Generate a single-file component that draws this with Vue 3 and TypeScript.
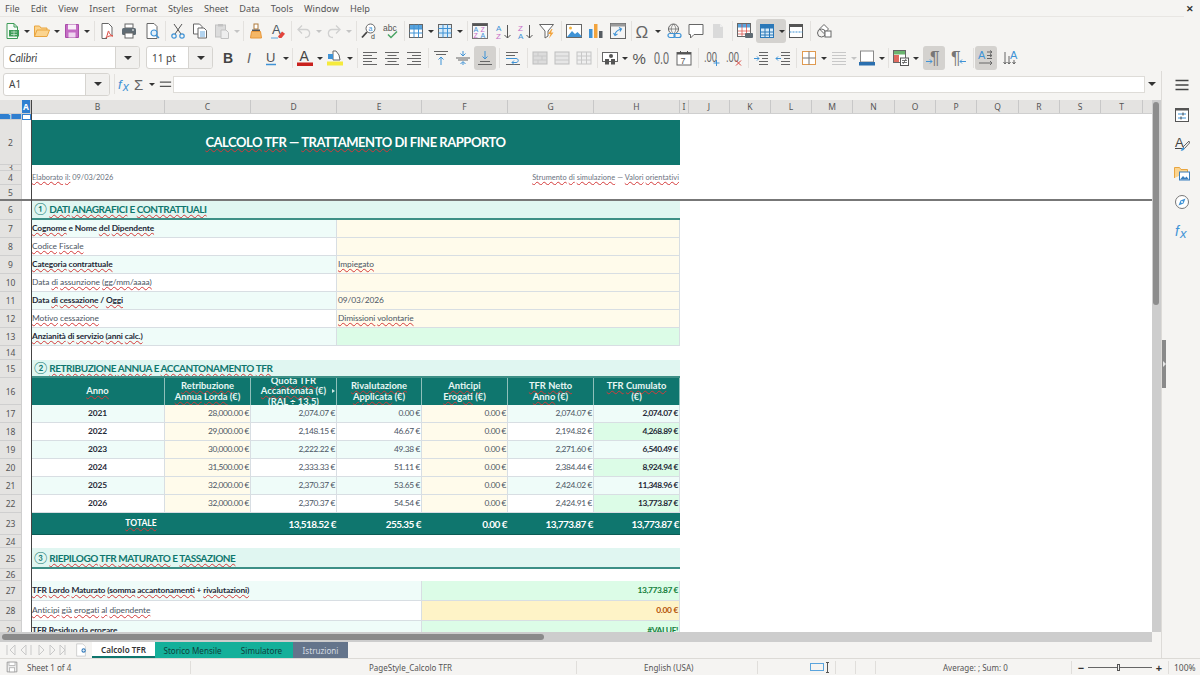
<script setup lang="ts">
type Cell = { s: number; t?: string; c?: string }
type Row = { n: number; h: number; cells: Cell[]; hc?: string }
type Tool = { k: 'btn'; i: string; dd: boolean; on: boolean } | { k: 'sep'; w: number } | { k: 'gap'; w: number }

const T = (x: number, y: number, size: number, fill: string, s: string, extra = '') =>
  `<text x="${x}" y="${y}" font-size="${size}" fill="${fill}" font-family="Liberation Sans" ${extra}>${s}</text>`
const GREY = '#666'
const BLUE = '#3f93d6'
const lines = (d: string, col = GREY) => `<path d="${d}" fill="none" stroke="${col}"/>`

// toolbar glyphs, all drawn on a 16 grid
const icons: Record<string, string> = {
  new: `<path d="M3 .5h7l3.5 3.5v11.5H3z" fill="#f6fbf7" stroke="#3d9b57"/><path d="M10 .5V4h3.5" fill="none" stroke="#3d9b57"/><rect x="5" y="7" width="10" height="6.5" fill="#3d9b57"/><path d="M7 9h6M7 11.5h6M10 7.5v5.5" stroke="#d6f0dc" stroke-width=".7"/>`,
  open: `<path d="M.5 13.5V3h5l1.5 2h6v2" fill="#fbd48f" stroke="#e9a53f"/><path d="M.5 13.5 3 7h12.5l-2.5 6.5z" fill="#fbd48f" stroke="#e9a53f"/>`,
  save: `<path d="M1.5 1.5h13v13h-13z" fill="#c46cc4" stroke="#a94ca9"/><rect x="4" y="1.5" width="8" height="5" fill="#f8eef8"/><rect x="4.5" y="9.5" width="7" height="5" fill="#efd6ef"/>`,
  pdf: `<path d="M3 15.500V.5h6.500L13 4v8" fill="#fff" stroke="${GREY}"/><path d="M3 15.500h5" stroke="${GREY}"/><path d="M7 15c2-4 2-7 2.500-7s.5 4 4.500 5c-3-.5-5 0-7 2z" fill="none" stroke="#d9453c"/>`,
  print: `<rect x="4" y="1" width="8" height="4" fill="#fff" stroke="${GREY}"/><rect x="1" y="5" width="14" height="7" rx="1.500" fill="#5f6b73"/><rect x="4" y="10" width="8" height="5" fill="#fff" stroke="${GREY}"/><path d="M11 7h2" stroke="#fff"/>`,
  preview: `<path d="M3 .5h7L13 3.500V15.500H3z" fill="#fff" stroke="${GREY}"/><circle cx="10" cy="10" r="3" fill="#e4f1fb" stroke="${BLUE}" stroke-width="1.200"/><path d="m12 12 3 3" stroke="${BLUE}" stroke-width="1.500"/>`,
  cut: `<path d="M4 1 11 11M12 1 5 11" stroke="#555" fill="none"/><circle cx="4" cy="13" r="2.200" fill="none" stroke="${BLUE}" stroke-width="1.200"/><circle cx="12" cy="13" r="2.200" fill="none" stroke="${BLUE}" stroke-width="1.200"/>`,
  copy: `<path d="M1.500 1h6L10 3.500V11H1.500z" fill="#fff" stroke="${GREY}"/><path d="M6 5h6l2.500 2.500V15H6z" fill="#fff" stroke="${GREY}"/><path d="M8 9h5M8 11h5M8 13h5" stroke="${BLUE}" stroke-width=".8"/>`,
  paste: `<rect x="1.500" y="2" width="10" height="12" fill="#dcdcdc" stroke="#c2c2c2"/><rect x="4" y="1" width="5" height="2.500" fill="#c2c2c2"/><path d="M7 7h5l2.500 2.500v6H7z" fill="#eee" stroke="#c2c2c2"/>`,
  clone: `<rect x="6" y="1" width="4" height="5" fill="#fff" stroke="#b07a3a"/><path d="M4 6.500h8v2H4z" fill="#555"/><path d="M3.500 8.500h9l1 6.500h-11z" fill="#f6b765" stroke="#e8973a"/>`,
  clear: T(2, 11, 13, '#4a5560', 'A') + `<path d="M8 13.500 12 8.500l3 2.300-3.500 4.200H9z" fill="#e2443c"/><path d="M1 15h7" stroke="#5aa4dd"/>`,
  undo: `<path d="M3 6.500h7c5 0 5 8-1 8" fill="none" stroke="#d0d0d0" stroke-width="1.300"/><path d="M6 2.500 2 6.500l4 4" fill="none" stroke="#d0d0d0" stroke-width="1.300"/>`,
  redo: `<path d="M13 6.500H6c-5 0-5 8 1 8" fill="none" stroke="#d0d0d0" stroke-width="1.300"/><path d="m10 2.500 4 4-4 4" fill="none" stroke="#d0d0d0" stroke-width="1.300"/>`,
  find: `<circle cx="9.500" cy="5.500" r="4.500" fill="#fff" stroke="${GREY}"/><path d="M6 9 1 14.500" stroke="#444" stroke-width="1.800"/>` + T(7.500, 8, 7, BLUE, 'a') + T(10, 15.500, 7, '#444', 'd'),
  spell: T(0, 8, 8.500, '#555', 'abc') + `<path d="m5 11.500 3 3 6-6" fill="none" stroke="#4aa564" stroke-width="1.500"/>`,
  rows: `<rect x="1.500" y="1.500" width="13" height="13" fill="#fff" stroke="${GREY}"/><rect x="2" y="2" width="12" height="4" fill="#5aa4dd"/><path d="M1.500 6h13M1.500 10h13M6 1.500v13M10.500 1.500v13" stroke="${BLUE}"/>`,
  cols: `<rect x="1.500" y="1.500" width="13" height="13" fill="#d9ebf8" stroke="${GREY}"/><path d="M1.500 5.500h13M1.500 10h13M6 1.500v13M10.500 1.500v13" stroke="${BLUE}"/>`,
  sort: `<rect x=".5" y=".5" width="15" height="15" fill="#f7f7f7" stroke="#777"/><rect x=".5" y=".5" width="15" height="2.500" fill="#555"/>` + T(1.500, 9, 7, BLUE, 'A') + T(8.500, 9, 7, '#c66cc6', 'Z') + T(1.500, 15, 7, '#c66cc6', 'Z') + T(8.500, 15, 7, BLUE, 'A'),
  asc: T(1, 7.500, 8, BLUE, 'A') + T(1, 15.500, 8, '#c66cc6', 'Z') + lines('M12.500 2v13M9.500 12l3 3 3-3', '#555'),
  desc: T(1, 7.500, 8, '#c66cc6', 'Z') + T(1, 15.500, 8, BLUE, 'A') + lines('M12.500 2v13M9.500 12l3 3 3-3', '#555'),
  filter: `<path d="M.5 1.500h14L9 8v5L6 15V8z" fill="#fff" stroke="${GREY}"/><path d="M12.500 6 9 11h2.500L10 15.500l4.500-6H12l1.500-3.500z" fill="#f2a33c"/>`,
  image: `<rect x=".5" y="1.500" width="15" height="13" fill="#fff" stroke="${GREY}"/><circle cx="4.500" cy="5" r="1.500" fill="#f2b441"/><path d="m1 14 5-6 3 3 2.500-2 4 4v1z" fill="${BLUE}"/>`,
  chart: `<rect x="1" y="6" width="3.500" height="9" fill="${BLUE}"/><rect x="6" y="1" width="3.500" height="14" fill="#f2a33c"/><rect x="11" y="8" width="3.500" height="7" fill="#565c62"/>`,
  pivot: `<rect x=".5" y=".5" width="15" height="15" fill="#f4f4f4" stroke="${GREY}"/><rect x=".5" y=".5" width="15" height="3" fill="#9a9a9a"/><path d="M5 12c0-3 3-5 6-6M9 4.500 11.500 6 10 8.500M3.500 10 5 12.500 7.500 11" fill="none" stroke="${BLUE}" stroke-width="1.100"/>`,
  omega: T(0.500, 14.500, 17, '#666', 'Ω'),
  link: `<circle cx="7.500" cy="6" r="5" fill="none" stroke="${GREY}"/><path d="M2.500 6h10M7.500 1c-3 3-3 7 0 10M7.500 1c3 3 3 7 0 10" fill="none" stroke="${GREY}" stroke-width=".7"/><rect x="2" y="10.500" width="7" height="4" rx="2" fill="#f5f4f2" stroke="${BLUE}" stroke-width="1.200"/><rect x="8" y="10.500" width="7" height="4" rx="2" fill="none" stroke="${BLUE}" stroke-width="1.200"/>`,
  comment: `<path d="M1 1.500h14v10H6L2.500 15v-3.500H1z" fill="#fff" stroke="${GREY}"/>`,
  note: `<path d="M3 1h7l3 3v11H3z" fill="#dadada"/><path d="M10 1v3h3" fill="#eee"/>`,
  hdrprint: `<rect x=".5" y=".5" width="13" height="13" fill="#fff" stroke="${GREY}"/><rect x="1" y="1" width="12" height="3.500" fill="#5aa4dd"/><path d="M1 8h12M1 11h12M5 1v12M9.500 1v12" stroke="#d9453c" stroke-width=".7"/><rect x="8" y="10" width="8" height="5" rx="1" fill="#5f6b73"/>`,
  freeze: `<rect x="1.500" y="1.500" width="13" height="13" fill="#d9ebf8" stroke="#2b78b8"/><rect x="2" y="2" width="12" height="3.500" fill="#2b78b8"/><path d="M1.500 9h13M1.500 12h13M6 1.500v13M10.500 1.500v13" stroke="#2b78b8"/>`,
  split: `<rect x="1.500" y="1.500" width="13" height="13" fill="#fff" stroke="#555"/><rect x="1.500" y="1.500" width="13" height="2.500" fill="#555"/><path d="M1.500 9h13" stroke="${BLUE}" stroke-dasharray="2 1"/>`,
  shapes: `<path d="M8 1.500 12.500 6 8 10.500 3.500 6z" fill="#fff" stroke="${GREY}"/><circle cx="5.500" cy="10" r="4" fill="none" stroke="${GREY}"/><rect x="9" y="8" width="6" height="6" fill="#fff" stroke="${GREY}"/>`,
  bold: T(3, 13, 14, '#444', 'B', 'font-weight="bold"'),
  italic: T(5, 13, 14, '#666', 'I', 'font-style="italic" font-family="Liberation Serif"'),
  under: T(3, 11.500, 13, '#555', 'U') + `<path d="M3 14.500h10" stroke="${BLUE}" stroke-width="1.500"/>`,
  fcolor: T(2.500, 11, 14, '#444', 'A') + `<rect x="0" y="12.500" width="16" height="3.500" fill="#c9211e"/>`,
  bcolor: `<path d="M6 1h3l3 4 1 5H6z" fill="#fff" stroke="${GREY}"/><rect x="1" y="4" width="5" height="5" fill="${BLUE}"/><rect x="0" y="11.500" width="16" height="4" fill="#f5ea3c"/>`,
  left: lines('M1 2.500h14M1 5.500h9M1 8.500h14M1 11.500h9M1 14.500h14'),
  center: lines('M1 2.500h14M3.500 5.500h9M1 8.500h14M3.500 11.500h9M1 14.500h14'),
  right: lines('M1 2.500h14M6 5.500h9M1 8.500h14M6 11.500h9M1 14.500h14'),
  top: lines('M1 1.500h14M3 4.500h10') + lines('M8 15V7M5.500 9.500 8 7l2.500 2.500', BLUE),
  middle: lines('M1 8h14M3 10h10') + lines('M8 1v5M5.500 3.500 8 6l2.500-2.500M8 15v-3M5.500 14 8 11.500 10.500 14', BLUE),
  bottom: lines('M1 14.500h14M3 11.500h10') + lines('M8 1v8M5.500 6.500 8 9l2.500-2.500', BLUE),
  wrap: lines('M1 2.500h12M1 5.500h9M1 14.500h14') + lines('M1 8.500h10c3 0 3 4 0 4H7M9 10.500l-2 2 2 2', BLUE),
  merge: `<rect x="1" y="2" width="14" height="12" fill="#dcdcdc" stroke="#bdbdbd"/><path d="M1 6h14M1 10h14M6 2v4M10 6v4M6 10v4" stroke="#c8c8c8"/>`,
  merge2: `<rect x="1" y="2" width="14" height="12" fill="#e6e6e6" stroke="#bdbdbd"/><path d="M1 6h14M1 10h14" stroke="#c8c8c8"/>`,
  merge3: `<rect x="1" y="2" width="14" height="12" fill="#efefef" stroke="#c4c4c4"/><path d="M1 6h14M1 10h14M5.500 2v12M10.500 2v12" stroke="#c8c8c8"/>`,
  money: `<rect x=".5" y="2.500" width="15" height="9" fill="#fff" stroke="${GREY}"/><circle cx="9" cy="6" r="2" fill="#555"/><rect x="3" y="9" width="4" height="5.500" fill="#555"/><rect x="9" y="9" width="4" height="5.500" fill="#555"/>`,
  percent: T(0.500, 13.500, 15, '#555', '%'),
  number: T(0, 13.500, 16, '#666', '0.0', 'textLength="15" lengthAdjust="spacingAndGlyphs"'),
  date: `<rect x="1" y="2.500" width="14" height="12.500" fill="#fff" stroke="${GREY}"/><rect x="1" y="2.500" width="14" height="2" fill="#555"/><path d="M4.500 1v3M11.500 1v3" stroke="#555"/>` + T(4.500, 13.500, 9, '#555', '7'),
  adddec: T(0, 12, 15, '#666', '.00', 'textLength="13" lengthAdjust="spacingAndGlyphs"') + lines('M12.500 10v6M9.500 13h6', BLUE),
  deldec: T(0, 12, 15, '#666', '.00', 'textLength="13" lengthAdjust="spacingAndGlyphs"') + lines('M10 10.500l5 5M15 10.500l-5 5', '#d9453c'),
  indent: lines('M6 2.500h9M6 5.500h9M9 8.500h6M6 11.500h9M6 14.500h9') + lines('M1 8.500h5M4 6.500l2 2-2 2', BLUE),
  outdent: lines('M6 2.500h9M6 5.500h9M9 8.500h6M6 11.500h9M6 14.500h9') + lines('M6 8.500H1M3 6.500l-2 2 2 2', BLUE),
  borders: `<rect x="1.500" y="1.500" width="13" height="13" fill="#fff" stroke="#e09a50"/><path d="M8 1.500v13M1.500 8h13" stroke="#777"/>`,
  bstyle: lines('M1 2.500h14M1 5.500h14M1 8.500h14M1 11.500h14M1 14.500h14', '#c8c8c8'),
  bcol: `<rect x="1.500" y="1" width="13" height="11" fill="#fff" stroke="#888"/><rect x="0" y="12" width="16" height="3.500" fill="#2b6fae"/>`,
  cond: `<rect x=".5" y=".5" width="12" height="12" fill="#fff" stroke="${GREY}"/><rect x="1" y="1" width="11" height="3.500" fill="#6bb56f"/><rect x="1" y="5" width="5" height="7" fill="#e06a5f"/><rect x="7.500" y="8" width="8" height="7.500" fill="#fff" stroke="#555"/><path d="M9 10.500h5M9 12.500h5M13 9l-3 5" stroke="#555" stroke-width=".8"/>`,
  ltr: T(4, 14, 18, '#777', '¶') + lines('M0 11.500h6M4 9.500l2 2-2 2', BLUE),
  rtl: T(0, 14, 18, '#777', '¶') + lines('M15 11.500H9M11 9.500l-2 2 2 2', BLUE),
  horiz: T(0, 9, 11, BLUE, 'A') + lines('M9 2h5M12 .5l2 1.500-2 1.500M9 5.500h5M12 4l2 1.500L12 7M9 8.500h5') + lines('M1 13h13M12 11l2 2-2 2'),
  vert: T(7, 9, 11, BLUE, 'A') + lines('M2 2v12M.5 12 2 14l1.500-2M6 6v8M4.500 12 6 14l1.500-2M11 10v4M9.500 12l1.500 2 1.500-2'),
  menu: `<path d="M1.500 3.500h13M1.500 8h13M1.500 12.500h13" stroke="#444" stroke-width="1.500"/>`,
  props: `<rect x="1.500" y="1.500" width="13" height="13" fill="#fff" stroke="#555"/><rect x="1.500" y="1.500" width="13" height="2" fill="#555"/><path d="M4 7h8M4 11h8" stroke="${BLUE}"/><path d="M9 5.500v3M7 9.500v3" stroke="#444"/>`,
  styles: T(1, 10.500, 13, '#444', 'A') + `<path d="M1 12.500h8" stroke="#444"/><path d="M15 5 9 11l1.500 1.500L15.500 7z" fill="none" stroke="${GREY}"/><path d="M7.500 12.500c1-1.500 3-1.500 3 0s-2 2.500-4 2.500c1-.5 1-1.500 1-2.500z" fill="${BLUE}"/>`,
  gallery: `<path d="M.5 13V2.500h5L7 4.500h6.500V7" fill="#fbd48f" stroke="#e9a53f"/><rect x="5.500" y="7" width="10" height="8" fill="#fff" stroke="#3a7fbd"/><path d="m6 14.500 3-3.500 2 2 1.500-1.500 2.500 3z" fill="#3a7fbd"/>`,
  nav: `<circle cx="8" cy="8" r="6.500" fill="#fff" stroke="#777"/><path d="M11.500 4.500 9.500 9.500l-5 2 2-5z" fill="${BLUE}"/><circle cx="8" cy="8" r="1" fill="#fff"/>`,
  fx: T(1, 13, 14, BLUE, 'f', 'font-style="italic" font-family="Liberation Serif"') + T(6, 14.500, 13, BLUE, 'x', 'font-style="italic" font-family="Liberation Serif"'),
  sigma: T(1, 13.500, 16, '#666', 'Σ'),
  equals: `<path d="M2 5.500h12M2 10h12" stroke="#555" stroke-width="1.500"/>`,
  disk: `<path d="M1.500 1.500h13v13h-13z" fill="#eee" stroke="#8a8a8a"/><rect x="4" y="1.500" width="8" height="4.500" fill="#fff" stroke="#aaa"/><rect x="4.500" y="9" width="7" height="5.500" fill="#fff" stroke="#aaa"/>`,
  plus: `<path d="M3 1h7l3 3v11H3z" fill="#fff" stroke="#ccc"/><circle cx="11" cy="8.500" r="2.500" fill="#3a7fbd"/><path d="M9.500 8.500h3M11 7v3" stroke="#fff" stroke-width=".8"/>`,
}

// "name", "name+" dropdown, "*name" highlighted, "|" separator, "|n" separator width, "_n" plain offset
function parse(src: string): Tool[] {
  return src.split(' ').map((t): Tool => {
    if (t[0] === '|') return { k: 'sep', w: t.length > 1 ? Number(t.slice(1)) : 5 }
    if (t[0] === '_') return { k: 'gap', w: Number(t.slice(1)) }
    const on = t[0] === '*'
    const dd = t.endsWith('+')
    return { k: 'btn', i: t.replace(/[*+]/g, ''), dd, on }
  })
}

const bar1 = parse('new+ open+ save+ | pdf print _1 preview |4 cut copy paste+ |4 clone clear |4 undo+ redo+ | find spell |3 rows+ _-1 cols+ | sort _1 asc desc filter | image chart pivot |3 omega+ _1 link comment note | hdrprint *freeze+ _-1 split |6 shapes')
const bar2 = parse('bold italic _-1 under+ |4 fcolor+ bcolor+ | left center right | top middle *bottom |6 wrap | merge merge2 merge3 |4 money+ percent number date |6 adddec deldec | indent outdent |4 borders+ bstyle+ _-2 bcol+ |4 cond+ _3 *ltr _3 rtl | *horiz _3 vert')

const menus = ['File', 'Edit', 'View', 'Insert', 'Format', 'Styles', 'Sheet', 'Data', 'Tools', 'Window', 'Help']
const sideIcons = ['props', 'styles', 'gallery', 'nav', 'fx']

const columns: [string, number][] = [
  ['A', 9], ['B', 134], ['C', 86], ['D', 86], ['E', 85], ['F', 86], ['G', 86], ['H', 86], ['I', 9],
  ['J', 41], ['K', 41], ['L', 41], ['M', 41], ['N', 42], ['O', 41], ['P', 41], ['Q', 42], ['R', 41], ['S', 41], ['T', 42],
]

// "~" in front of a word marks the red spell-check squiggle
function words(t = '') {
  return t.split(' ').map((w) => ({
    w: w.replace(/^~/, ''),
    bad: w[0] === '~',
    circ: /^[①②③]$/.test(w),
  }))
}

const form = (label: string, value: string, zebra: boolean, bold: boolean, vc = 'in'): Cell[] => [
  { s: 3, t: label, c: (zebra ? 'alt ' : 'wh ') + (bold ? 'lb' : 'ln') + ' line' },
  { s: 4, t: value, c: vc + ' val line' },
]

const yearRow = (n: number, y: string, v: string[], zebra: boolean): Row => ({
  n, h: 18,
  cells: [
    { s: 1, t: y, c: `${zebra ? 'alt' : 'wh'} yr line` },
    { s: 1, t: v[0], c: 'in num line' },
    { s: 1, t: v[1], c: `${zebra ? 'alt' : 'wh'} num line` },
    { s: 1, t: v[2], c: `${zebra ? 'alt' : 'wh'} num line` },
    { s: 1, t: v[3], c: 'in num line' },
    { s: 1, t: v[4], c: `${zebra ? 'alt' : 'wh'} num line` },
    { s: 1, t: v[5], c: `${zebra ? 'alt' : 'gr'} num sum line` },
  ],
})

const section = (n: number, h: number, t: string): Row => ({ n, h, cells: [{ s: 7, t, c: 'band' }] })

const rows: Row[] = [
  { n: 1, h: 6, cells: [], hc: 'sel' },
  { n: 2, h: 45, cells: [{ s: 7, t: '~CALCOLO ~TFR — ~TRATTAMENTO DI FINE RAPPORTO', c: 'title' }] },
  { n: 3, h: 6, cells: [] },
  { n: 4, h: 14, cells: [
    { s: 4, t: '~Elaborato ~il: 09/03/2026', c: 'note' },
    { s: 3, t: '~Strumento ~di ~simulazione — ~Valori ~orientativi', c: 'note right' },
  ] },
  { n: 5, h: 15, cells: [] },
  section(6, 20, '① ~DATI ~ANAGRAFICI E ~CONTRATTUALI'),
  { n: 7, h: 18, cells: form('~Cognome e Nome ~del ~Dipendente', '', true, true) },
  { n: 8, h: 18, cells: form('~Codice ~Fiscale', '', false, false) },
  { n: 9, h: 18, cells: form('~Categoria ~contrattuale', '~Impiegato', true, true) },
  { n: 10, h: 18, cells: form('Data ~di ~assunzione ~(gg/mm/aaaa)', '', false, false) },
  { n: 11, h: 18, cells: form('Data ~di ~cessazione / ~Oggi', '09/03/2026', true, true) },
  { n: 12, h: 18, cells: form('~Motivo ~cessazione', '~Dimissioni ~volontarie', false, false) },
  { n: 13, h: 18, cells: form('~Anzianità ~di ~servizio ~(anni ~calc.)', '', true, true, 'gr') },
  { n: 14, h: 14, cells: [] },
  section(15, 18, '② ~RETRIBUZIONE ~ANNUA E ~ACCANTONAMENTO ~TFR'),
  { n: 16, h: 27, cells: [
    { s: 1, t: '~Anno', c: 'th' },
    { s: 1, t: '~Retribuzione\n~Annua ~Lorda (€)', c: 'th' },
    { s: 1, t: '~Quota ~TFR\n~Accantonata (€)\n~(RAL ÷ 13.5)', c: 'th over' },
    { s: 1, t: '~Rivalutazione\n~Applicata (€)', c: 'th' },
    { s: 1, t: '~Anticipi\n~Erogati (€)', c: 'th' },
    { s: 1, t: '~TFR ~Netto\n~Anno (€)', c: 'th' },
    { s: 1, t: '~TFR ~Cumulato\n(€)', c: 'th' },
  ] },
  yearRow(17, '2021', ['28,000.00 €', '2,074.07 €', '0.00 €', '0.00 €', '2,074.07 €', '2,074.07 €'], true),
  yearRow(18, '2022', ['29,000.00 €', '2,148.15 €', '46.67 €', '0.00 €', '2,194.82 €', '4,268.89 €'], false),
  yearRow(19, '2023', ['30,000.00 €', '2,222.22 €', '49.38 €', '0.00 €', '2,271.60 €', '6,540.49 €'], true),
  yearRow(20, '2024', ['31,500.00 €', '2,333.33 €', '51.11 €', '0.00 €', '2,384.44 €', '8,924.94 €'], false),
  yearRow(21, '2025', ['32,000.00 €', '2,370.37 €', '53.65 €', '0.00 €', '2,424.02 €', '11,348.96 €'], true),
  yearRow(22, '2026', ['32,000.00 €', '2,370.37 €', '54.54 €', '0.00 €', '2,424.91 €', '13,773.87 €'], false),
  { n: 23, h: 22, cells: [
    { s: 2, t: '~TOTALE', c: 'total tl' },
    { s: 1, t: '13,518.52 €', c: 'total' },
    { s: 1, t: '255.35 €', c: 'total' },
    { s: 1, t: '0.00 €', c: 'total' },
    { s: 1, t: '13,773.87 €', c: 'total' },
    { s: 1, t: '13,773.87 €', c: 'total' },
  ] },
  { n: 24, h: 13, cells: [] },
  section(25, 21, '③ ~RIEPILOGO ~TFR ~MATURATO E ~TASSAZIONE'),
  { n: 26, h: 12, cells: [] },
  { n: 27, h: 20, cells: [
    { s: 4, t: '~TFR ~Lordo ~Maturato ~(somma ~accantonamenti + ~rivalutazioni)', c: 'alt lb line' },
    { s: 3, t: '13,773.87 €', c: 'gr money-g line' },
  ] },
  { n: 28, h: 20, cells: [
    { s: 4, t: '~Anticipi ~già ~erogati ~al ~dipendente', c: 'wh ln line' },
    { s: 3, t: '0.00 €', c: 'warn line' },
  ] },
  { n: 29, h: 20, cells: [
    { s: 4, t: '~TFR ~Residuo ~da ~erogare', c: 'alt lb line' },
    { s: 3, t: '#VALUE!', c: 'gr money-g line' },
  ] },
]

const tabs = [
  { t: 'Calcolo TFR', c: 'cur', w: 63 },
  { t: 'Storico Mensile', c: 'teal', w: 75 },
  { t: 'Simulatore', c: 'teal', w: 63 },
  { t: 'Istruzioni', c: 'slate', w: 55 },
]
</script>

<template>
  <div class="app">
    <div class="menubar">
      <span v-for="m in menus" :key="m" class="menu">{{ m }}</span>
      <span class="close">✕</span>
    </div>

    <div class="toolbar">
      <template v-for="(b, i) in bar1" :key="i">
        <i v-if="b.k === 'sep'" class="sep" :style="{ width: b.w + 'px' }" />
        <i v-else-if="b.k === 'gap'" class="gap" :style="{ marginLeft: b.w + 'px' }" />
        <span v-else class="btn" :class="{ on: b.on }">
          <span class="ico"><svg viewBox="0 0 16 16" v-html="icons[b.i]" /></span>
          <span v-if="b.dd" class="dd" :class="{ off: ['paste', 'undo', 'redo'].includes(b.i) }" />
        </span>
      </template>
    </div>

    <div class="toolbar second">
      <div class="combo font"><span class="combo-txt ital">Calibri</span><span class="combo-btn"><i class="arrow" /></span></div>
      <div class="combo size"><span class="combo-txt">11 pt</span><span class="combo-btn"><i class="arrow" /></span></div>
      <template v-for="(b, i) in bar2" :key="i">
        <i v-if="b.k === 'sep'" class="sep" :style="{ width: b.w + 'px' }" />
        <i v-else-if="b.k === 'gap'" class="gap" :style="{ marginLeft: b.w + 'px' }" />
        <span v-else class="btn" :class="{ on: b.on }">
          <span class="ico"><svg viewBox="0 0 16 16" v-html="icons[b.i]" /></span>
          <span v-if="b.dd" class="dd" :class="{ off: b.i === 'bstyle' }" />
        </span>
      </template>
    </div>

    <div class="body">
      <div class="main">
        <div class="formula">
          <div class="combo name"><span class="combo-txt">A1</span><span class="combo-btn"><i class="arrow" /></span></div>
          <i class="sep fsep" />
          <span class="ico"><svg viewBox="0 0 16 16" v-html="icons.fx" /></span>
          <span class="btn sm"><span class="ico"><svg viewBox="0 0 16 16" v-html="icons.sigma" /></span><span class="dd" /></span>
          <span class="ico"><svg viewBox="0 0 16 16" v-html="icons.equals" /></span>
          <div class="finput" />
          <i class="arrow farrow" />
        </div>

        <div class="sheet-wrap">
          <div class="sheet">
            <div class="colhead">
              <span class="corner" />
              <span v-for="c in columns" :key="c[0]" class="ch" :class="{ sel: c[0] === 'A' }" :style="{ width: c[1] + 'px' }">{{ c[0] }}</span>
            </div>
            <div v-for="r in rows" :key="r.n" class="row" :style="{ height: r.h + 'px' }">
              <span class="rh" :class="r.hc">{{ r.n }}</span>
              <span class="cola" />
              <div v-for="(c, ci) in r.cells" :key="ci" class="cell" :class="c.c" :style="{ gridColumn: 'span ' + c.s }">
                <template v-for="(ln, li) in (c.t || '').split('\n')" :key="li">
                  <div class="ln1">
                    <template v-for="(w, wi) in words(ln)" :key="wi"><span :class="{ bad: w.bad, circ: w.circ }">{{ w.w }}</span>{{ ' ' }}</template>
                  </div>
                </template>
                <i v-if="c.c === 'th over'" class="clip-mark" />
              </div>
            </div>
            <i class="freeze-h" />
            <i class="freeze-v" />
            <i class="cursor" />
          </div>
          <div class="vscroll"><i class="vthumb" /></div>
        </div>

        <div class="hscroll"><i class="hthumb" /></div>

        <div class="tabbar">
          <svg class="tabnav" viewBox="0 0 60 14">
            <path d="M1 2v10M9 2 4 7l5 5zM20 2l-5 5 5 5zM25 2v10M33 2l5 5-5 5zM44 2l5 5-5 5zM54 2l5 5-5 5zM59 2v10" fill="none" stroke="#c9c9c9" />
          </svg>
          <span class="ico addtab"><svg viewBox="0 0 16 16" v-html="icons.plus" /></span>
          <span v-for="t in tabs" :key="t.t" class="tab" :class="t.c" :style="{ width: t.w + 'px' }">{{ t.t }}</span>
        </div>
      </div>

      <aside class="sidebar">
        <i class="handle" />
        <span class="side-ico first"><svg viewBox="0 0 16 16" v-html="icons.menu" /></span>
        <span v-for="s in sideIcons" :key="s" class="side-ico"><svg viewBox="0 0 16 16" v-html="icons[s]" /></span>
      </aside>
    </div>

    <div class="status">
      <span class="st s1"><svg class="disk" viewBox="0 0 16 16" v-html="icons.disk" />Sheet 1 of 4</span>
      <span class="st s2">PageStyle_Calcolo TFR</span>
      <span class="st s3">English (USA)</span>
      <span class="st s4">
        <i class="selrect" /><i class="ibeam" />
      </span>
      <span class="st s5" />
      <span class="st s6" />
      <span class="st s7">Average: ; Sum: 0</span>
      <span class="st s8">
        <b>−</b><span class="slider"><i /></span><b>+</b>
      </span>
      <span class="s9">100%</span>
    </div>
  </div>
</template>

<style>
html, body { margin: 0; background: #f5f4f2; }
</style>

<style scoped>
.app {
  width: 1200px;
  height: 675px;
  display: flex;
  flex-direction: column;
  overflow: hidden;
  background: #f5f4f2;
  color: #444;
  font-family: "Noto Sans", sans-serif;
  font-size: 10px;
}

.menubar {
  height: 17px;
  display: flex;
  align-items: center;
  gap: 11px;
  padding-left: 5px;
  box-sizing: border-box;
  position: relative;
  flex: none;
}
.menubar::after {
  content: "";
  position: absolute;
  left: 0;
  right: 16px;
  bottom: 0;
  height: 1px;
  background: #e8e6e3;
}
.menu { color: #555; font-size: 9.2px; }
.close { margin-left: auto; margin-right: 6px; font-size: 9px; font-weight: 700; color: #333; }

.toolbar {
  height: 27px;
  flex: none;
  display: flex;
  align-items: center;
  padding-left: 1px;
}
.toolbar.second { padding-left: 3px; }
.btn {
  display: flex;
  align-items: center;
  height: 24px;
  border-radius: 3px;
  flex: none;
}
.btn.on { background: #d4d2cf; }
.ico {
  width: 22px;
  height: 22px;
  display: flex;
  align-items: center;
  justify-content: center;
  flex: none;
}
.ico svg { width: 16px; height: 16px; overflow: visible; }
.dd {
  width: 8px;
  height: 22px;
  position: relative;
}
.dd::after {
  content: "";
  position: absolute;
  left: 1px;
  top: 10px;
  border: 3px solid transparent;
  border-top: 3px solid #333;
  border-bottom: 0;
}
.dd.off::after { border-top-color: #c4c4c4; }
.sep {
  flex: none;
  height: 20px;
  position: relative;
}
.sep::after {
  content: "";
  position: absolute;
  left: 50%;
  top: 0;
  bottom: 0;
  width: 1px;
  background: #e3e1de;
}
.gap { flex: none; }

.combo {
  display: flex;
  height: 23px;
  box-sizing: border-box;
  border: 1px solid #d6d4d0;
  border-radius: 3px;
  background: #fff;
  overflow: hidden;
  flex: none;
}
.combo-txt {
  flex: 1;
  display: flex;
  align-items: center;
  padding-left: 5px;
  font-size: 10px;
  color: #444;
}
.ital { font-style: italic; font-family: "Lato", sans-serif; font-size: 10.5px; }
.combo-btn {
  width: 23px;
  background: #f1f0ee;
  border-left: 1px solid #d6d4d0;
  display: flex;
  align-items: center;
  justify-content: center;
}
.arrow {
  width: 0;
  height: 0;
  border: 4px solid transparent;
  border-top: 4px solid #333;
  border-bottom: 0;
}
.font { width: 137px; margin-right: 6px; }
.size { width: 67px; margin-right: 4px; }

.body { flex: 1; min-height: 0; display: flex; }
.main { width: 1161px; display: flex; flex-direction: column; flex: none; }

.formula {
  height: 29px;
  flex: none;
  display: flex;
  align-items: center;
  padding: 0 0 3px 3px;
  box-sizing: border-box;
}
.name { width: 107px; height: 23px; }
.fsep { width: 7px; }
.formula .ico { width: 15px; }
.formula .ico svg { width: 15px; height: 15px; }
.sm { margin-left: 1px; }
.sm .dd { width: 10px; }
.finput {
  flex: none;
  width: 972px;
  height: 17px;
  background: #fff;
  border: 1px solid #dedcd8;
  box-sizing: border-box;
}
.farrow { margin-left: 3px; }

.sheet-wrap { flex: 1; min-height: 0; display: flex; }
.sheet {
  width: 1152px;
  position: relative;
  overflow: hidden;
  background: #fff;
  font-family: "Lato", sans-serif;
  font-size: 8.4px;
  flex: none;
}
.colhead {
  display: flex;
  height: 14px;
  background: #e4e3e1;
  border-bottom: 1px solid #cfcfcf;
  box-sizing: border-box;
  font-family: "Noto Sans", sans-serif;
}
.corner { width: 22px; flex: none; }
.ch {
  flex: none;
  text-align: center;
  box-sizing: border-box;
  border-right: 1px solid #c8c8c8;
  font-size: 8.5px;
  line-height: 13px;
  color: #555;
  overflow: hidden;
}
.ch.sel { background: #2f7fd0; color: #fff; font-weight: 700; }

.row {
  display: grid;
  grid-template-columns: 22px 9px 134px 86px 86px 85px 86px 86px 86px;
  overflow: hidden;
}
.rh {
  background: #e4e3e1;
  border-right: 1px solid #cfcfcf;
  border-bottom: 1px solid #cfcfcf;
  box-sizing: border-box;
  display: flex;
  align-items: center;
  justify-content: center;
  font-family: "Noto Sans", sans-serif;
  font-size: 8.5px;
  color: #555;
  overflow: hidden;
}
.rh.sel { background: #2f7fd0; color: #fff; }

.cell {
  box-sizing: border-box;
  display: flex;
  flex-direction: column;
  justify-content: center;
  padding: 0 1px;
  white-space: nowrap;
  overflow: hidden;
  min-width: 0;
  color: #4b5563;
  position: relative;
  letter-spacing: -.06px;
}
.ln1 { line-height: 1.2; }
.bad {
  text-decoration: underline wavy #d43a3a 1px;
  text-underline-offset: .5px;
}
.circ { font-size: 12px; font-weight: 400; letter-spacing: 0; line-height: 1; }
.line {
  border-bottom: 1px solid #d8dee3;
  border-right: 1px solid #d8dee3;
}
.alt { background: #effcf9; }
.wh { background: #fff; }
.in { background: #fffbeb; }
.gr { background: #dcfce7; }
.lb { font-weight: 700; color: #1f2937; letter-spacing: -.14px; }
.ln { color: #4b5563; }
.val { color: #4b5563; }

.title {
  background: #0f766e;
  color: #fff;
  font-size: 13px;
  font-weight: 700;
  align-items: center;
  letter-spacing: -.48px;
}
.note { color: #6b7280; font-size: 7.4px; letter-spacing: 0; }
.note.right { align-items: flex-end; letter-spacing: .05px; }
.band {
  background: #e0f6f1;
  color: #0f766e;
  font-size: 10px;
  font-weight: 700;
  border-bottom: 2px solid #3d8f86;
  padding-left: 3px;
  letter-spacing: -.45px;
}
.th {
  background: #0f766e;
  color: #e8f6f4;
  font-weight: 700;
  text-align: center;
  align-items: center;
  font-size: 9.4px;
  border-right: 1px solid #8fc0ba;
  overflow: hidden;
  letter-spacing: 0;
}
.th .ln1 { line-height: 1.12; }
.clip-mark {
  position: absolute;
  right: 1px;
  top: 11px;
  border: 2.5px solid transparent;
  border-left: 3px solid #cfe5e2;
  border-right: 0;
}
.yr { align-items: center; font-weight: 700; color: #1f2937; }
.num { align-items: flex-end; letter-spacing: -.36px; }
.sum { font-weight: 700; color: #1f2937; letter-spacing: -.45px; }
.total {
  background: #0f766e;
  color: #fff;
  font-size: 10px;
  font-weight: 700;
  align-items: flex-end;
  border-bottom: 1px solid #0b5c55;
  letter-spacing: -.55px;
}
.tl { align-items: center; font-size: 8.5px; letter-spacing: 0; }
.money-g { align-items: flex-end; color: #15803d; font-weight: 700; letter-spacing: -.4px; }
.warn {
  background: #fef3c7;
  color: #b45309;
  font-weight: 700;
  align-items: flex-end;
  letter-spacing: -.3px;
}

.freeze-h {
  position: absolute;
  left: 0;
  right: 0;
  top: 99px;
  height: 2px;
  background: #777;
}
.freeze-v {
  position: absolute;
  left: 31px;
  top: 0;
  bottom: 0;
  width: 1px;
  background: #444;
}
.cursor {
  position: absolute;
  left: 22px;
  top: 14px;
  width: 9px;
  height: 6px;
  box-sizing: border-box;
  border: 1px solid #2f7fd0;
}

.vscroll {
  width: 9px;
  background: #cdcdcd;
  position: relative;
  flex: none;
}
.vthumb {
  position: absolute;
  left: 1px;
  right: 2px;
  top: 2px;
  height: 203px;
  background: #8d8d8d;
  border-radius: 3px;
}
.hscroll {
  height: 10px;
  width: 1152px;
  background: #cdcdcd;
  position: relative;
  flex: none;
}
.hthumb {
  position: absolute;
  left: 2px;
  top: 2px;
  height: 6px;
  width: 542px;
  background: #8a8a8a;
  border-radius: 3px;
}

.tabbar {
  height: 16px;
  flex: none;
  display: flex;
  align-items: stretch;
  font-size: 8.1px;
}
.tabnav { width: 60px; height: 14px; margin: 1px 0 0 6px; flex: none; }
.addtab { width: 22px; height: 16px; margin-left: 4px; }
.addtab svg { width: 14px; height: 14px; }
.tab {
  display: flex;
  align-items: center;
  justify-content: center;
  box-sizing: border-box;
  flex: none;
}
.tab.cur {
  background: #fff;
  color: #333;
  font-weight: 600;
  border-bottom: 2px solid #0f766e;
}
.tab.teal { background: #14b09a; color: #0f3f3a; }
.tab.slate { background: #64748b; color: #d5dbe3; }

.sidebar {
  flex: 1;
  border-left: 1px solid #dddbd8;
  display: flex;
  flex-direction: column;
  align-items: center;
  position: relative;
  padding-top: 6px;
}
.side-ico {
  width: 16px;
  height: 16px;
  margin-bottom: 13px;
  margin-left: 2px;
}
.side-ico.first { margin-bottom: 14px; }
.side-ico svg { width: 16px; height: 16px; overflow: visible; display: block; }
.handle {
  position: absolute;
  left: 0;
  top: 269px;
  width: 4px;
  height: 48px;
  background: #8a8a8a;
}
.handle::after {
  content: "";
  position: absolute;
  left: 1px;
  top: 21px;
  border: 3px solid transparent;
  border-left: 3px solid #e6e6e6;
  border-right: 0;
}

.status {
  height: 17px;
  flex: none;
  display: flex;
  align-items: center;
  border-top: 1px solid #dcdad6;
  box-sizing: border-box;
  font-size: 8px;
  color: #555;
  background: #f5f4f2;
}
.st {
  height: 13px;
  box-sizing: border-box;
  border-right: 1px solid #e0dedb;
  display: flex;
  align-items: center;
  flex: none;
}
.disk { width: 12px; height: 12px; margin: 0 9px 0 6px; }
.s1 { width: 191px; }
.s2 { width: 386px; padding-left: 178px; }
.s3 { width: 181px; padding-left: 67px; }
.s4 { width: 78px; padding-left: 52px; }
.s5, .s6 { width: 20px; }
.s7 { width: 196px; padding-left: 67px; }
.s8 { width: 97px; padding-left: 5px; gap: 3px; }
.s8 b { font-weight: 700; color: #333; font-size: 11px; width: 8px; text-align: center; }
.s9 { padding-left: 5px; font-size: 8.5px; }
.selrect {
  width: 12px;
  height: 6px;
  border: 1px solid #5aa4dd;
  margin-right: 2px;
  box-sizing: content-box;
}
.ibeam {
  width: 3px;
  height: 9px;
  border-top: 1px solid #555;
  border-bottom: 1px solid #555;
  position: relative;
}
.ibeam::after {
  content: "";
  position: absolute;
  left: 1px;
  top: 0;
  bottom: 0;
  width: 1px;
  background: #555;
}
.slider {
  width: 64px;
  height: 1px;
  background: #666;
  position: relative;
}
.slider i {
  position: absolute;
  left: 29px;
  top: -3px;
  width: 3px;
  height: 7px;
  background: #f5f4f2;
  border: 1px solid #555;
  box-sizing: border-box;
}
</style>
